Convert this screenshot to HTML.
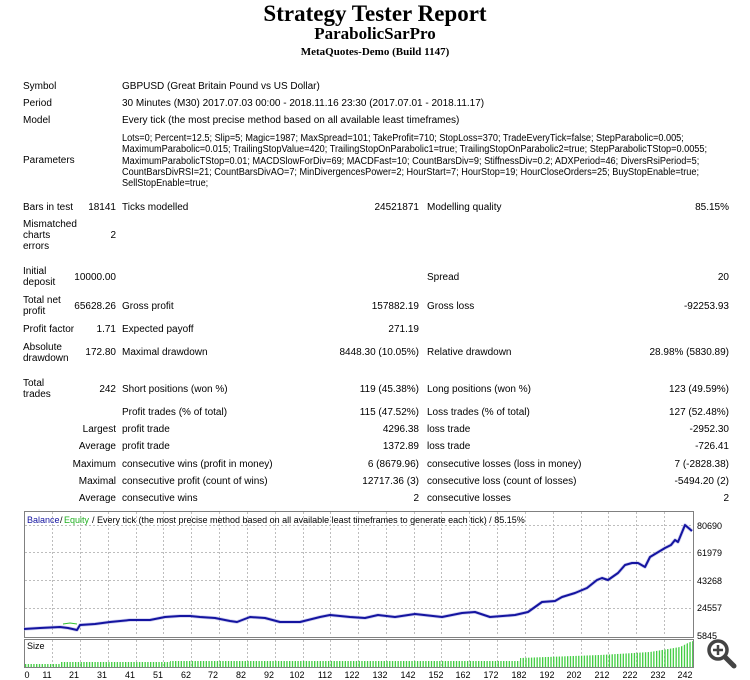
<!DOCTYPE html>
<html><head><meta charset="utf-8"><style>
body{margin:0;width:750px;height:680px;background:#fff;position:relative;overflow:hidden;font-family:"Liberation Sans",sans-serif;font-size:10px;color:#000}
.t{position:absolute;white-space:nowrap;line-height:11px}
.r{text-align:right}
.h{position:absolute;left:0;width:750px;text-align:center;font-family:"Liberation Serif",serif;font-weight:bold;white-space:nowrap}
</style></head><body>
<div class="h" style="top:1px;font-size:23px">Strategy Tester Report</div>
<div class="h" style="top:24px;font-size:17px">ParabolicSarPro</div>
<div class="h" style="top:46px;font-size:11px">MetaQuotes-Demo (Build 1147)</div>

<div class="t" style="left:23px;top:81px">Symbol</div>
<div class="t" style="left:122px;top:81px">GBPUSD (Great Britain Pound vs US Dollar)</div>
<div class="t" style="left:23px;top:98px">Period</div>
<div class="t" style="left:122px;top:98px">30 Minutes (M30) 2017.07.03 00:00 - 2018.11.16 23:30 (2017.07.01 - 2018.11.17)</div>
<div class="t" style="left:23px;top:115px">Model</div>
<div class="t" style="left:122px;top:115px">Every tick (the most precise method based on all available least timeframes)</div>
<div class="t" style="left:23px;top:155px">Parameters</div>
<div class="t" style="left:122px;top:133px;line-height:11.3px;transform:scaleX(0.915);transform-origin:0 0">Lots=0; Percent=12.5; Slip=5; Magic=1987; MaxSpread=101; TakeProfit=710; StopLoss=370; TradeEveryTick=false; StepParabolic=0.005;<br>MaximumParabolic=0.015; TrailingStopValue=420; TrailingStopOnParabolic1=true; TrailingStopOnParabolic2=true; StepParabolicTStop=0.0055;<br>MaximumParabolicTStop=0.01; MACDSlowForDiv=69; MACDFast=10; CountBarsDiv=9; StiffnessDiv=0.2; ADXPeriod=46; DiversRsiPeriod=5;<br>CountBarsDivRSI=21; CountBarsDivAO=7; MinDivergencesPower=2; HourStart=7; HourStop=19; HourCloseOrders=25; BuyStopEnable=true;<br>SellStopEnable=true;</div>

<div class="t" style="left:23px;top:202px">Bars in test</div>
<div class="t r" style="right:634px;top:202px">18141</div>
<div class="t" style="left:122px;top:202px">Ticks modelled</div>
<div class="t r" style="right:331px;top:202px">24521871</div>
<div class="t" style="left:427px;top:202px">Modelling quality</div>
<div class="t r" style="right:21px;top:202px">85.15%</div>

<div class="t" style="left:23px;top:219px">Mismatched<br>charts<br>errors</div>
<div class="t r" style="right:634px;top:230px">2</div>

<div class="t" style="left:23px;top:266px">Initial<br>deposit</div>
<div class="t r" style="right:634px;top:272px">10000.00</div>
<div class="t" style="left:427px;top:272px">Spread</div>
<div class="t r" style="right:21px;top:272px">20</div>

<div class="t" style="left:23px;top:295px">Total net<br>profit</div>
<div class="t r" style="right:634px;top:301px">65628.26</div>
<div class="t" style="left:122px;top:301px">Gross profit</div>
<div class="t r" style="right:331px;top:301px">157882.19</div>
<div class="t" style="left:427px;top:301px">Gross loss</div>
<div class="t r" style="right:21px;top:301px">-92253.93</div>

<div class="t" style="left:23px;top:324px">Profit factor</div>
<div class="t r" style="right:634px;top:324px">1.71</div>
<div class="t" style="left:122px;top:324px">Expected payoff</div>
<div class="t r" style="right:331px;top:324px">271.19</div>

<div class="t" style="left:23px;top:342px">Absolute<br>drawdown</div>
<div class="t r" style="right:634px;top:347px">172.80</div>
<div class="t" style="left:122px;top:347px">Maximal drawdown</div>
<div class="t r" style="right:331px;top:347px">8448.30 (10.05%)</div>
<div class="t" style="left:427px;top:347px">Relative drawdown</div>
<div class="t r" style="right:21px;top:347px">28.98% (5830.89)</div>

<div class="t" style="left:23px;top:378px">Total<br>trades</div>
<div class="t r" style="right:634px;top:384px">242</div>
<div class="t" style="left:122px;top:384px">Short positions (won %)</div>
<div class="t r" style="right:331px;top:384px">119 (45.38%)</div>
<div class="t" style="left:427px;top:384px">Long positions (won %)</div>
<div class="t r" style="right:21px;top:384px">123 (49.59%)</div>

<div class="t" style="left:122px;top:407px">Profit trades (% of total)</div>
<div class="t r" style="right:331px;top:407px">115 (47.52%)</div>
<div class="t" style="left:427px;top:407px">Loss trades (% of total)</div>
<div class="t r" style="right:21px;top:407px">127 (52.48%)</div>

<div class="t r" style="right:634px;top:424px">Largest</div>
<div class="t" style="left:122px;top:424px">profit trade</div>
<div class="t r" style="right:331px;top:424px">4296.38</div>
<div class="t" style="left:427px;top:424px">loss trade</div>
<div class="t r" style="right:21px;top:424px">-2952.30</div>

<div class="t r" style="right:634px;top:441px">Average</div>
<div class="t" style="left:122px;top:441px">profit trade</div>
<div class="t r" style="right:331px;top:441px">1372.89</div>
<div class="t" style="left:427px;top:441px">loss trade</div>
<div class="t r" style="right:21px;top:441px">-726.41</div>

<div class="t r" style="right:634px;top:459px">Maximum</div>
<div class="t" style="left:122px;top:459px">consecutive wins (profit in money)</div>
<div class="t r" style="right:331px;top:459px">6 (8679.96)</div>
<div class="t" style="left:427px;top:459px">consecutive losses (loss in money)</div>
<div class="t r" style="right:21px;top:459px">7 (-2828.38)</div>

<div class="t r" style="right:634px;top:476px">Maximal</div>
<div class="t" style="left:122px;top:476px">consecutive profit (count of wins)</div>
<div class="t r" style="right:331px;top:476px">12717.36 (3)</div>
<div class="t" style="left:427px;top:476px">consecutive loss (count of losses)</div>
<div class="t r" style="right:21px;top:476px">-5494.20 (2)</div>

<div class="t r" style="right:634px;top:493px">Average</div>
<div class="t" style="left:122px;top:493px">consecutive wins</div>
<div class="t r" style="right:331px;top:493px">2</div>
<div class="t" style="left:427px;top:493px">consecutive losses</div>
<div class="t r" style="right:21px;top:493px">2</div>

<svg width="750" height="680" style="position:absolute;left:0;top:0" font-family="Liberation Sans, sans-serif" font-size="9">
<defs>
<pattern id="bars" x="24" y="0" width="2.78" height="10" patternUnits="userSpaceOnUse"><rect x="1" y="0" width="1.2" height="10" fill="#2ec82e"/></pattern>
</defs>
<g stroke="#bdbdbd" stroke-dasharray="2,2" stroke-width="1">
<path d="M52.5 512V636M80.5 512V636M108.5 512V636M136.5 512V636M163.5 512V636M191.5 512V636M219.5 512V636M247.5 512V636M275.5 512V636M303.5 512V636M330.5 512V636M358.5 512V636M386.5 512V636M414.5 512V636M441.5 512V636M469.5 512V636M497.5 512V636M525.5 512V636M553.5 512V636M581.5 512V636M608.5 512V636M636.5 512V636M664.5 512V636"/>
<path d="M52.5 640V667M80.5 640V667M108.5 640V667M136.5 640V667M163.5 640V667M191.5 640V667M219.5 640V667M247.5 640V667M275.5 640V667M303.5 640V667M330.5 640V667M358.5 640V667M386.5 640V667M414.5 640V667M441.5 640V667M469.5 640V667M497.5 640V667M525.5 640V667M553.5 640V667M581.5 640V667M608.5 640V667M636.5 640V667M664.5 640V667"/>
<path d="M25 525.5H692M25 552.5H692M25 580.5H692M25 608.5H692"/>
</g>
<rect x="24.5" y="511.5" width="669" height="126" fill="none" stroke="#808080"/>
<rect x="24.5" y="639.5" width="669" height="28" fill="none" stroke="#808080"/>
<path d="M25 667 V664 H60 V662 H170 V661 H520 V658 L600 655 L650 652 L680 647 L690 642 L693 641 V667Z" fill="url(#bars)"/>
<polyline fill="none" stroke="#30c030" stroke-width="1" points="63,624 70,623 77,624"/>
<polyline fill="none" stroke="#a0a0e0" stroke-width="3.5" stroke-linejoin="round" opacity="0.5" points="24,629 40,628 60,627 68,628 77,630 80,625 95,624 110,622 130,620 150,620 165,617 180,616 190,616 200,617 215,618 230,621 237,622 250,617 265,618 280,622 300,622 320,617 330,615 350,617 365,618 378,615 395,617 415,614 442,617 462,613 475,612 490,617 515,615 528,612 542,602 555,601 562,597 575,593 587,588 597,580 602,578 608,580 618,573 625,565 632,563 638,563 645,567 650,557 665,548 671,545 675,540 678,542 685,525 692,531"/>
<polyline fill="none" stroke="#1414a0" stroke-width="2" stroke-linejoin="round" points="24,629 40,628 60,627 68,628 77,630 80,625 95,624 110,622 130,620 150,620 165,617 180,616 190,616 200,617 215,618 230,621 237,622 250,617 265,618 280,622 300,622 320,617 330,615 350,617 365,618 378,615 395,617 415,614 442,617 462,613 475,612 490,617 515,615 528,612 542,602 555,601 562,597 575,593 587,588 597,580 602,578 608,580 618,573 625,565 632,563 638,563 645,567 650,557 665,548 671,545 675,540 678,542 685,525 692,531"/>
<text x="27" y="523" fill="#1414a0">Balance</text><text x="60" y="523">/</text><text x="64" y="523" fill="#20b020">Equity</text><text x="92" y="523">/ Every tick (the most precise method based on all available least timeframes to generate each tick) / 85.15%</text>
<text x="27" y="649">Size</text>
<g text-anchor="start">
<text x="697" y="529">80690</text><text x="697" y="556">61979</text><text x="697" y="584">43268</text><text x="697" y="611">24557</text><text x="697" y="639">5845</text>
</g>
<g text-anchor="middle">
<text x="27" y="678">0</text><text x="47" y="678">11</text><text x="74" y="678">21</text><text x="102" y="678">31</text><text x="130" y="678">41</text><text x="158" y="678">51</text><text x="186" y="678">62</text><text x="213" y="678">72</text><text x="241" y="678">82</text><text x="269" y="678">92</text><text x="297" y="678">102</text><text x="325" y="678">112</text><text x="352" y="678">122</text><text x="380" y="678">132</text><text x="408" y="678">142</text><text x="436" y="678">152</text><text x="463" y="678">162</text><text x="491" y="678">172</text><text x="519" y="678">182</text><text x="547" y="678">192</text><text x="574" y="678">202</text><text x="602" y="678">212</text><text x="630" y="678">222</text><text x="658" y="678">232</text><text x="685" y="678">242</text>
</g>
<g stroke="#444" fill="none">
<circle cx="718" cy="650" r="9" stroke-width="3.5"/>
<path d="M725 657 L734 666" stroke-width="5" stroke-linecap="round"/>
<path d="M713 650H723M718 645V655" stroke-width="2.5"/>
</g>
</svg>
</body></html>
